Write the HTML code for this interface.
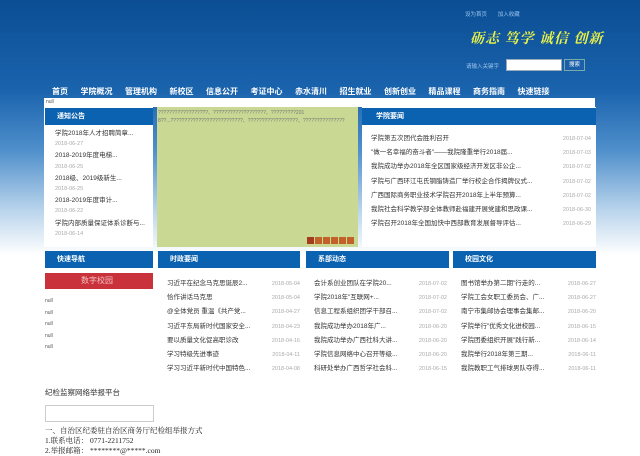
<!DOCTYPE html>
<html><head><meta charset="utf-8"><style>
*{margin:0;padding:0;box-sizing:border-box}
html{background:#fff}
body{width:640px;height:450px;overflow:hidden;position:relative;font-family:"Liberation Sans","Noto Sans CJK SC",sans-serif;font-size:7px;color:#333;background:#fff}
.bg{position:absolute;left:0;top:0;width:640px;height:260px;background:linear-gradient(to bottom,#0b4e94 0px,#1a63ad 90px,#4f8fcb 150px,#b9d4ec 210px,#fff 255px)}
.a{position:absolute}
.tb{position:absolute;background:#0a62b0;color:#fff;font-weight:bold;font-size:7px;line-height:17px;padding-left:12px;height:17px}
.nav span{margin-right:12.5px;color:#fff;font-weight:bold;font-size:8px}
.li{position:absolute;font-size:6.5px;line-height:14.2px;color:#333}
.li div{display:flex;justify-content:space-between;white-space:nowrap;overflow:hidden}
.li i{font-style:normal;color:#aaa;font-size:5.5px}
</style></head><body>
<div class="bg"></div>
<div class="a" style="left:465px;top:10px;color:#9cc4ee;font-size:5.5px">设为首页 &nbsp;&nbsp;&nbsp;&nbsp;&nbsp; 加入收藏</div>
<div class="a" style="left:470px;top:28px;color:#e8f24a;font-size:14px;font-weight:bold;font-style:italic;font-family:'Noto Serif CJK SC',serif;letter-spacing:1px">砺志 笃学 诚信 创新</div>
<div class="a" style="left:466px;top:62px;color:#9cc4ee;font-size:5.5px">请输入关键字</div>
<div class="a" style="left:506px;top:59px;width:56px;height:12px;background:#fff;border:1px solid #9ab"></div>
<div class="a" style="left:564px;top:59px;width:21px;height:12px;background:#1a5fa8;border:1px solid #7aa;color:#fff;font-size:5.5px;text-align:center;line-height:10px">搜索</div>
<div class="a nav" style="left:52px;top:86px;white-space:nowrap"><span>首页</span><span>学院概况</span><span>管理机构</span><span>新校区</span><span>信息公开</span><span>考证中心</span><span>赤水清川</span><span>招生就业</span><span>创新创业</span><span>精品课程</span><span>商务指南</span><span>快速链接</span></div>
<div class="a" style="left:44px;top:98px;width:551px;height:9px;background:#fff;font-size:5px;line-height:9px;padding-left:2px;color:#555">null</div>
<div class="a" style="left:44px;top:107px;width:109px;height:140px;background:#fff"></div>
<div class="tb" style="left:45px;top:108px;width:108px">通知公告</div>
<div class="a" style="left:55px;top:128px;font-size:6.5px;line-height:11.2px;color:#333">
<div>学院2018年人才招聘简章...</div><div style="color:#aaa;font-size:5.5px">2018-06-27</div>
<div>2018-2019年度电梯...</div><div style="color:#aaa;font-size:5.5px">2018-06-25</div>
<div>2018级、2019级新生...</div><div style="color:#aaa;font-size:5.5px">2018-06-25</div>
<div>2018-2019年度审计...</div><div style="color:#aaa;font-size:5.5px">2018-06-22</div>
<div>学院内部质量保证体系诊断与...</div><div style="color:#aaa;font-size:5.5px">2018-06-14</div></div>
<div class="a" style="left:157px;top:107px;width:201px;height:140px;background:#c9d893"></div>
<div class="a" style="left:158px;top:109px;width:150px;font-size:5px;line-height:8px;color:#777;word-break:break-all">??????????????????、???????????????????、?????????2018??...??????????????????????????、??????????????????、???????????????</div>
<div class="a" style="left:307px;top:237px;display:flex;gap:1px"><b style="width:7px;height:7px;background:#a33c1c"></b><b style="width:7px;height:7px;background:#c0622a"></b><b style="width:7px;height:7px;background:#c0622a"></b><b style="width:7px;height:7px;background:#c0622a"></b><b style="width:7px;height:7px;background:#c0622a"></b><b style="width:7px;height:7px;background:#c0622a"></b></div>
<div class="a" style="left:362px;top:107px;width:234px;height:140px;background:#fff"></div>
<div class="tb" style="left:362px;top:108px;width:234px;padding-left:14px">学院要闻</div>
<div class="li" style="left:371px;top:132px;width:220px">
<div>学院第五次团代会胜利召开<i>2018-07-04</i></div>
<div>"做一名幸福的奋斗者"——我院隆重举行2018届...<i>2018-07-03</i></div>
<div>我院成功举办2018年全区国家级经济开发区非公企...<i>2018-07-02</i></div>
<div>学院与广西环江屯氏钢脂铸造厂举行校企合作揭牌仪式...<i>2018-07-02</i></div>
<div>广西国际商务职业技术学院召开2018年上半年预算...<i>2018-07-02</i></div>
<div>我院社会科学教学部全体教师赴福建开展党建和思政课...<i>2018-06-30</i></div>
<div>学院召开2018年全国加快中西部教育发展督导评估...<i>2018-06-29</i></div></div>
<div class="tb" style="left:45px;top:251px;width:108px">快速导航</div>
<div class="tb" style="left:158px;top:251px;width:142px">时政要闻</div>
<div class="tb" style="left:306px;top:251px;width:143px">系部动态</div>
<div class="tb" style="left:453px;top:251px;width:143px">校园文化</div>
<div class="a" style="left:45px;top:273px;width:108px;height:16px;background:#c9313b;color:#f5c0c0;font-size:8px;line-height:16px;padding-left:36px">数字校园</div>
<div class="a" style="left:45px;top:296px;font-size:5px;line-height:11.5px;color:#555">null<br>null<br>null<br>null<br>null</div>
<div class="li" style="left:167px;top:277px;width:133px"><div>习近平在纪念马克思诞辰2...<i>2018-05-04</i></div><div>恰作讲话马克思<i>2018-05-04</i></div><div>@全体党员 重温《共产党...<i>2018-04-27</i></div><div>习近平东局新时代国家安全...<i>2018-04-23</i></div><div>要以质量文化促高职诊改<i>2018-04-16</i></div><div>学习特级先进事迹<i>2018-04-11</i></div><div>学习习近平新时代中国特色...<i>2018-04-08</i></div></div>
<div class="li" style="left:314px;top:277px;width:133px"><div>会计系创业团队在学院20...<i>2018-07-02</i></div><div>学院2018年"互联网+...<i>2018-07-02</i></div><div>信息工程系组织团学干部召...<i>2018-07-02</i></div><div>我院成功举办2018年广...<i>2018-06-20</i></div><div>我院成功举办广西社科大讲...<i>2018-06-20</i></div><div>学院信息网络中心召开等级...<i>2018-06-20</i></div><div>科研处举办广西哲学社会科...<i>2018-06-15</i></div></div>
<div class="li" style="left:461px;top:277px;width:135px"><div>图书馆举办第二期"行走的...<i>2018-06-27</i></div><div>学院工会女职工委员会、广...<i>2018-06-27</i></div><div>南宁市集邮协会理事会集邮...<i>2018-06-20</i></div><div>学院举行"优秀文化进校园...<i>2018-06-15</i></div><div>学院团委组织开展"践行新...<i>2018-06-14</i></div><div>我院举行2018年第三期...<i>2018-06-11</i></div><div>我院教职工气排球男队夺得...<i>2018-06-11</i></div></div>
<div class="a" style="left:45px;top:387px;font-size:7.5px;color:#333">纪检监察网络举报平台</div>
<div class="a" style="left:45px;top:405px;width:109px;height:17px;border:1px solid #ccc;background:#fff"></div>
<div class="a" style="left:45px;top:426px;font-size:7.5px;color:#222;line-height:10px;font-family:'Liberation Serif','Noto Serif CJK SC',serif">一、自治区纪委驻自治区商务厅纪检组举报方式<br>1.联系电话： 0771-2211752<br>2.举报邮箱： ********@*****.com</div>
</body></html>
